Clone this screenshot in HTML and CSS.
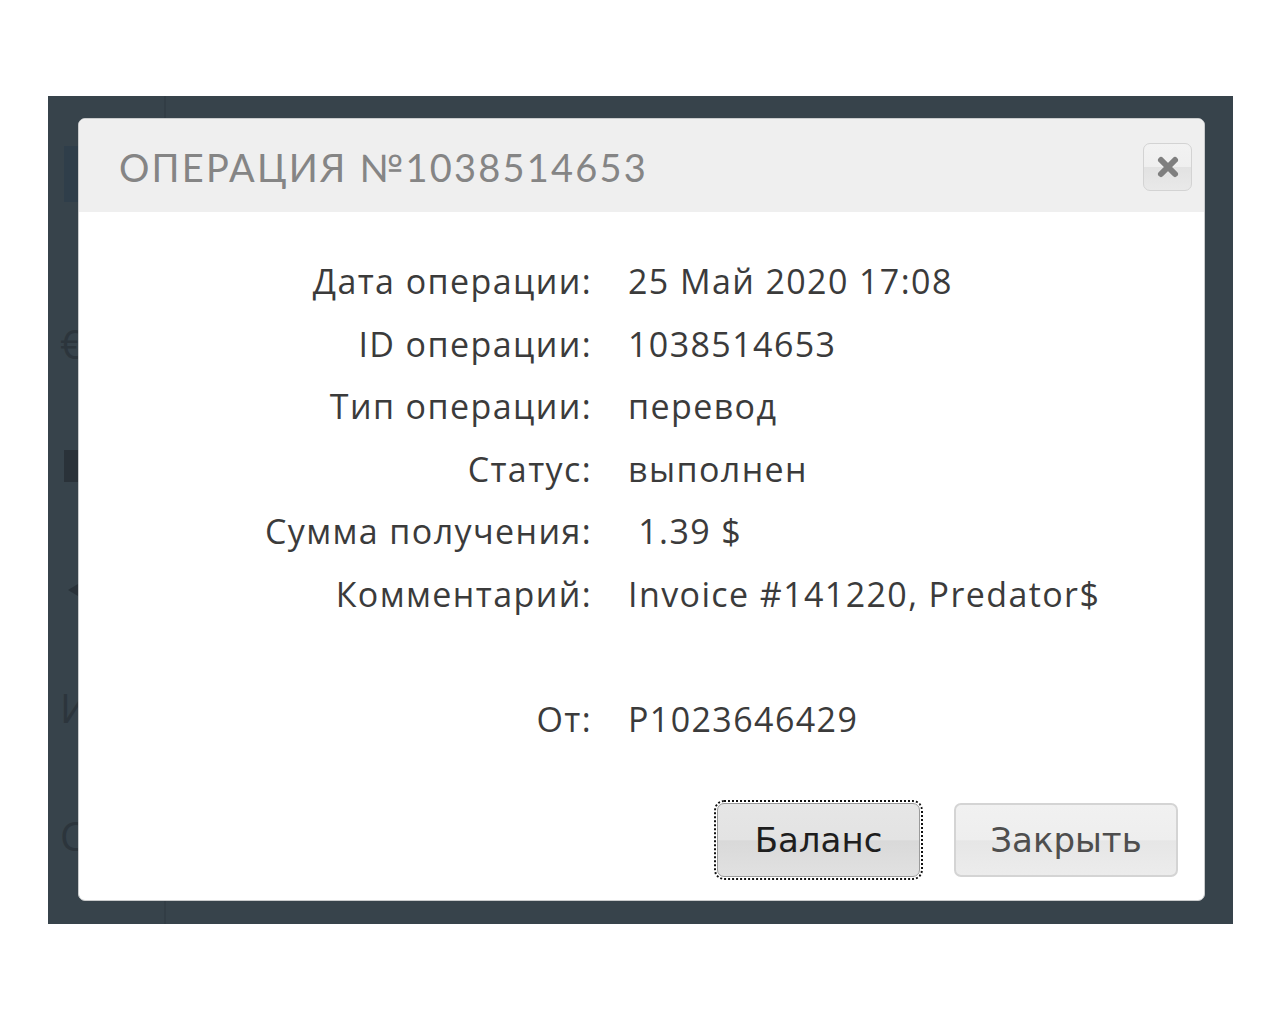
FILE: index.html
```html
<!DOCTYPE html>
<html lang="ru">
<head>
<meta charset="utf-8">
<title>Операция</title>
<link rel="stylesheet" href="styles.css">
</head>
<body>
<div class="backdrop">
  <div class="ghost">
    <span class="g-block"></span>
    <span class="g-glyph g-euro">€</span>
    <span class="g-square"></span>
    <span class="g-tri"></span>
    <span class="g-glyph g-i">И</span>
    <span class="g-glyph g-c">С</span>
  </div>
  <div class="ghost-line"></div>
  <div class="dialog">
    <div class="dialog-header">
      <h1 class="dialog-title">ОПЕРАЦИЯ №1038514653</h1>
      <button class="close-btn" aria-label="Закрыть">
        <svg width="26" height="26" viewBox="0 0 26 26"><path d="M6 6 L20 20 M20 6 L6 20" stroke="#7f7f7f" stroke-width="6" stroke-linecap="round"/></svg>
      </button>
    </div>
    <div class="dialog-body">
      <dl class="details">
        <dt>Дата операции:</dt><dd>25 Май 2020 17:08</dd>
        <dt>ID операции:</dt><dd>1038514653</dd>
        <dt>Тип операции:</dt><dd>перевод</dd>
        <dt>Статус:</dt><dd>выполнен</dd>
        <dt>Сумма получения:</dt><dd>&nbsp;1.39 $</dd>
        <dt>Комментарий:</dt><dd>Invoice #141220, Predator$</dd>
        <dt class="spacer"></dt><dd class="spacer"></dd>
        <dt>От:</dt><dd>P1023646429</dd>
      </dl>
      <div class="actions">
        <button class="btn btn-focus">Баланс</button>
        <button class="btn btn-plain">Закрыть</button>
      </div>
    </div>
  </div>
</div>
</body>
</html>
```

FILE: styles.css
```css
html, body {
  margin: 0;
  padding: 0;
  background: #ffffff;
}

body {
  padding: 96px 0 0 48px;
  font-family: "Open Sans", "Liberation Sans", sans-serif;
}

.backdrop {
  position: relative;
  width: 1185px;
  height: 828px;
  background: #37434b;
  padding: 22px 0 0 30px;
  box-sizing: border-box;
}

.ghost {
  position: absolute;
  left: 0;
  top: 0;
  width: 30px;
  height: 100%;
}

.g-block {
  position: absolute;
  left: 16px;
  top: 50px;
  width: 14px;
  height: 56px;
  background: #2f3e4a;
}

.g-glyph {
  position: absolute;
  left: 12px;
  color: #2c353c;
  font-size: 40px;
  line-height: 1;
}

.g-euro { top: 228px; }
.g-i { top: 592px; }
.g-c { top: 720px; }

.g-square {
  position: absolute;
  left: 16px;
  top: 354px;
  width: 14px;
  height: 32px;
  background: #2a3239;
}

.g-tri {
  position: absolute;
  left: 20px;
  top: 488px;
  width: 0;
  height: 0;
  border-top: 6px solid transparent;
  border-bottom: 6px solid transparent;
  border-right: 10px solid #2a3239;
}

.ghost-line {
  position: absolute;
  left: 116px;
  top: 0;
  width: 2px;
  height: 100%;
  background: #323d45;
}

.dialog {
  position: relative;
  width: 1127px;
  height: 783px;
  background: #ffffff;
  border: 1px solid #c9cbcc;
  border-radius: 7px;
  box-sizing: border-box;
  overflow: hidden;
  display: flex;
  flex-direction: column;
}

.dialog-header {
  height: 93px;
  flex: none;
  background: #efefef;
  display: flex;
  align-items: center;
  justify-content: space-between;
  padding: 0 12px 0 40px;
}

.dialog-title {
  margin: 0;
  font-family: "Lato", "Open Sans", sans-serif;
  font-weight: 400;
  font-size: 38px;
  letter-spacing: 2.2px;
  color: #858585;
  padding-top: 2px;
}

.close-btn {
  width: 49px;
  height: 48px;
  border: 1px solid #d3d3d3;
  border-radius: 7px;
  background: linear-gradient(#f2f2f2 0%, #efefef 50%, #e2e2e2 51%, #e9e9e9 100%);
  display: flex;
  align-items: center;
  justify-content: center;
  padding: 0;
  margin-top: 2px;
}

.dialog-body {
  flex: 1;
  display: flex;
  flex-direction: column;
  padding: 38px 26px 0 0;
}

.details {
  margin: 0;
  display: grid;
  grid-template-columns: 513px 1fr;
  column-gap: 36px;
  color: #3b3b3b;
  font-size: 34px;
  letter-spacing: 1.4px;
  line-height: 62.5px;
}

.details dt {
  text-align: right;
}

.details dd {
  margin: 0;
}

.details .spacer {
  height: 62.5px;
}

.actions {
  display: flex;
  justify-content: flex-end;
  gap: 34px;
  margin-top: 53px;
}

.btn {
  font-family: "DejaVu Sans", "Liberation Sans", sans-serif;
  font-size: 34px;
  height: 74px;
  border-radius: 7px;
  padding: 0;
  cursor: pointer;
}

.btn-focus {
  width: 203px;
  color: #1e1e1e;
  border: 1px solid #9a9a9a;
  background: linear-gradient(#e6e6e6 0%, #e3e3e3 50%, #d9d9d9 51%, #e1e1e1 100%);
  outline: 2px dotted #111;
  outline-offset: 1px;
}

.btn-plain {
  width: 224px;
  color: #4e4e4e;
  border: 2px solid #d4d4d4;
  background: linear-gradient(#f1f1f1 0%, #eeeeee 50%, #e6e6e6 51%, #ececec 100%);
}
```
